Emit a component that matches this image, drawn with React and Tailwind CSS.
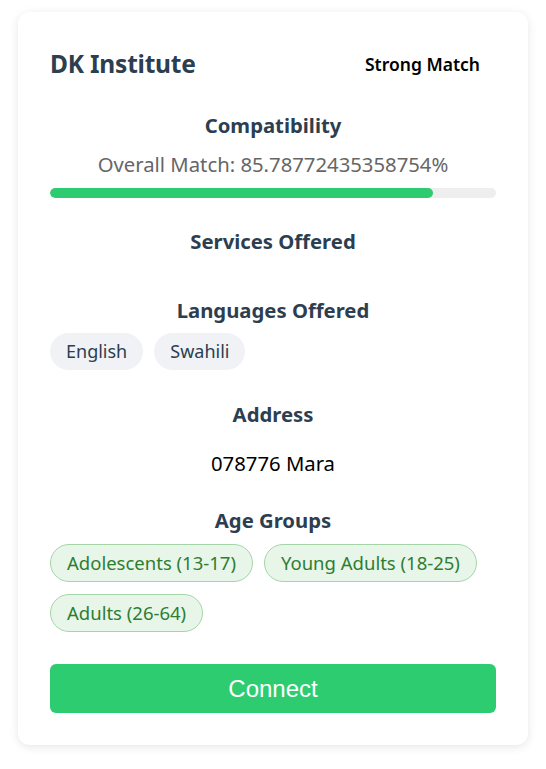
import React from "react";

function Chip({ children, green }) {
  return green ? (
    <span className="inline-flex items-center h-[38px] px-4 rounded-full bg-[#e8f5e9] border border-[#a5d6a7] text-[#2e7d32] text-[18.5px]">
      {children}
    </span>
  ) : (
    <span className="inline-flex items-center h-[37px] px-4 rounded-full bg-[#f0f2f5] text-[#2c3e50] text-[18px]">
      {children}
    </span>
  );
}

export default function App() {
  return (
    <div className="bg-white min-h-[769px] pt-3 px-[18px] font-['Noto_Sans','Open_Sans',sans-serif]">
      <div className="bg-white rounded-xl shadow-[0_2px_10px_rgba(0,0,0,0.1)] px-8 pt-8 pb-8 flex flex-col">
        <div className="flex items-center justify-between h-10">
          <h2 className="text-[24.5px] font-bold text-[#2c3e50] tracking-[-0.2px]">DK Institute</h2>
          <span className="px-4 text-[17.5px] font-semibold text-black">Strong Match</span>
        </div>

        <h3 className="mt-[27px] text-center text-[20.3px] leading-7 font-bold text-[#2c3e50]">Compatibility</h3>
        <p className="mt-3 text-center text-[20.3px] leading-[27px] text-[#666]">Overall Match: 85.78772435358754%</p>
        <div className="mt-[10px] h-[10px] rounded-full bg-[#eee] overflow-hidden">
          <div className="h-full bg-[#2ecc71] rounded-full" style={{ width: "85.78772435358754%" }} />
        </div>

        <h3 className="mt-[29px] text-center text-[20.3px] leading-7 font-bold text-[#2c3e50]">Services Offered</h3>

        <h3 className="mt-[41px] text-center text-[20.3px] leading-7 font-bold text-[#2c3e50]">Languages Offered</h3>
        <div className="mt-[9px] flex flex-wrap gap-[11px]">
          <Chip>English</Chip>
          <Chip>Swahili</Chip>
        </div>

        <h3 className="mt-[30px] text-center text-[20.3px] leading-7 font-bold text-[#2c3e50]">Address</h3>
        <p className="mt-[22px] text-center text-[20.3px] leading-[27px] text-black">078776 Mara</p>

        <h3 className="mt-[29px] text-center text-[20.3px] leading-7 font-bold text-[#2c3e50]">Age Groups</h3>
        <div className="mt-[10px] flex flex-wrap gap-x-[11px] gap-y-3">
          <Chip green>Adolescents (13-17)</Chip>
          <Chip green>Young Adults (18-25)</Chip>
          <Chip green>Adults (26-64)</Chip>
        </div>

        <button className="mt-8 h-[49px] w-full rounded-md bg-[#2ecc71] text-white text-[24px] font-['Liberation_Sans',Arial,sans-serif]">
          Connect
        </button>
      </div>
    </div>
  );
}
